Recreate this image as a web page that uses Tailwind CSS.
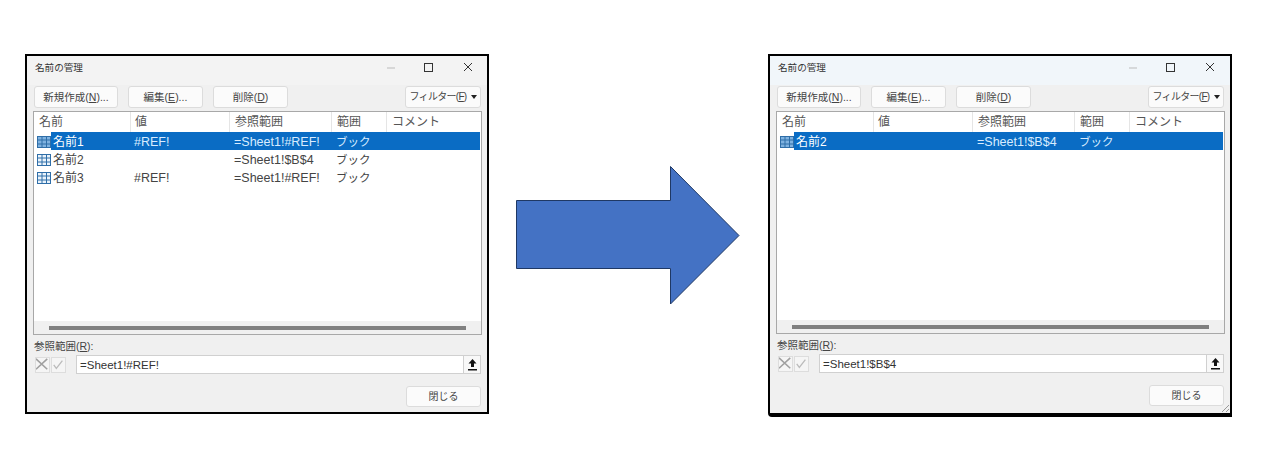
<!DOCTYPE html>
<html lang="ja">
<head>
    <meta charset="UTF-8">
    <title>名前の管理</title>
    <script src="https://cdn.jsdelivr.net/npm/@tailwindcss/browser@4"></script>
</head>
<body class="bg-white">
    <div class="flex items-start w-[1280px] h-[461px] overflow-hidden pl-[25px] pt-[54px] bg-white text-[#444] text-[12.5px] leading-[18px] font-['Liberation_Sans','Noto_Sans_CJK_JP',sans-serif]">

        <!-- before -->
        <div class="relative flex flex-col w-[464px] h-[360px] shrink-0 border-2 border-black bg-[#f0f0f0]">
            <div class="flex items-center h-[29px] pl-2 bg-[#f3f3f3] text-[9.6px] text-[#333]">
                <span class="flex-1 mt-[-6px]">名前の管理</span>
                <svg class="w-[104px] h-[12px] mr-[14px] mt-[-6px]" viewBox="0 0 104 12" fill="none" stroke="#333" stroke-width="1"><path d="M18 6h8" stroke="#bbb"/><rect x="55.5" y="1.5" width="8" height="8"/><path d="M95 1l8 8M103 1l-8 8"/></svg>
            </div>
            <div class="flex h-[22px] ml-[7px] mt-px text-[10.5px]">
                <button class="w-[84px] bg-[#fbfbfb] border border-[#dcdcdc] rounded-[3px]">新規作成(<u>N</u>)...</button>
                <button class="w-[75px] ml-[10px] bg-[#fbfbfb] border border-[#dcdcdc] rounded-[3px]">編集(<u>E</u>)...</button>
                <button class="w-[75px] ml-[10px] bg-[#fbfbfb] border border-[#dcdcdc] rounded-[3px]">削除(<u>D</u>)</button>
                <button class="flex items-center justify-center gap-[4px] w-[76px] ml-[117px] bg-[#fbfbfb] border border-[#dcdcdc] rounded-[3px] text-[10px]"><span class="tracking-[-0.7px]">フィルター(<u>F</u>)</span><svg class="w-[6px] h-[4px]" viewBox="0 0 6 4" fill="#222"><path d="M0 0h6L3 4z"/></svg></button>
            </div>
            <div class="flex flex-col w-[449px] h-[224px] ml-[6px] mt-[3px] border border-[#a8a8a8] bg-white">
                <div class="grid grid-cols-[96px_99px_102px_55px_1fr] h-[20px] shrink-0 text-[12px] leading-[21px] text-[#555]">
                    <div class="pl-[5px]">名前</div>
                    <div class="pl-1 border-l border-[#e5e5e5]">値</div>
                    <div class="pl-[5px] border-l border-[#e5e5e5]">参照範囲</div>
                    <div class="pl-[5px] border-l border-[#e5e5e5]">範囲</div>
                    <div class="pl-[5px] border-l border-[#e5e5e5]">コメント</div>
                </div>
                <div class="relative grid grid-cols-[96px_100px_102px_55px_1fr] h-[18px] mr-px">
                    <div class="absolute left-[17px] right-0 top-0 bottom-0 bg-[#0a6cc4]"></div>
                    <div class="relative flex items-center pl-[3px] gap-[2px] text-white text-[12px]">
                        <svg class="w-[14px] h-[12px] shrink-0" viewBox="0 0 14 12" fill="#7fb2e0" stroke="#2f6ea8"><rect x=".5" y=".5" width="13" height="11"/><path d="M.5 4h13M.5 8h13M5 .5v11M9.5 .5v11"/></svg>
                        <span class="mt-px">名前1</span>
                    </div>
                    <div class="relative pl-1 pt-px text-[#d8ecff]">#REF!</div>
                    <div class="relative pl-1 pt-px text-[#d8ecff]">=Sheet1!#REF!</div>
                    <div class="relative pl-1 pt-px text-[#d8ecff] text-[11.5px]">ブック</div>
                </div>
                <div class="grid grid-cols-[96px_100px_102px_55px_1fr] h-[18px]">
                    <div class="flex items-center pl-[3px] gap-[2px] text-[12px]">
                        <svg class="w-[14px] h-[12px] shrink-0" viewBox="0 0 14 12" fill="#eaf3fb" stroke="#2f6ea8"><rect x=".5" y=".5" width="13" height="11"/><path d="M.5 4h13M.5 8h13M5 .5v11M9.5 .5v11"/></svg>
                        <span class="mt-px">名前2</span>
                    </div>
                    <div class="pl-1 pt-px"></div>
                    <div class="pl-1 pt-px">=Sheet1!$B$4</div>
                    <div class="pl-1 pt-px text-[11.5px]">ブック</div>
                </div>
                <div class="grid grid-cols-[96px_100px_102px_55px_1fr] h-[18px]">
                    <div class="flex items-center pl-[3px] gap-[2px] text-[12px]">
                        <svg class="w-[14px] h-[12px] shrink-0" viewBox="0 0 14 12" fill="#eaf3fb" stroke="#2f6ea8"><rect x=".5" y=".5" width="13" height="11"/><path d="M.5 4h13M.5 8h13M5 .5v11M9.5 .5v11"/></svg>
                        <span class="mt-px">名前3</span>
                    </div>
                    <div class="pl-1 pt-px">#REF!</div>
                    <div class="pl-1 pt-px">=Sheet1!#REF!</div>
                    <div class="pl-1 pt-px text-[11.5px]">ブック</div>
                </div>
                <div class="flex-1"></div>
                <div class="flex items-center h-[13px] bg-[#f0f0f0] pl-[15px]">
                    <div class="w-[417px] h-[4px] bg-[#808080]"></div>
                </div>
            </div>
            <div class="h-[18px] ml-[7px] mt-[2px] text-[10.5px] leading-[18px]">参照範囲(<u>R</u>):</div>
            <div class="flex items-center h-[19px] ml-[8px]">
                <div class="w-[15px] h-[16px] border border-[#ddd] bg-[#f5f5f5]">
                    <svg viewBox="0 0 15 16" fill="none" stroke="#a0a0a0" stroke-width="1.8"><path d="M0 1l13 12M13 1L0 13"/></svg>
                </div>
                <div class="w-[15px] h-[16px] ml-px border border-[#ddd] bg-[#f5f5f5]">
                    <svg viewBox="0 0 15 16" fill="none" stroke="#bbb" stroke-width="1.5"><path d="M2 8l3 4 7-9"/></svg>
                </div>
                <div class="flex items-center w-[405px] h-[19px] ml-[10px] pl-[3px] border border-[#d0d0d0] bg-white text-[11.5px]">
                    <span class="flex-1 text-[#333]">=Sheet1!#REF!</span>
                    <div class="flex items-center justify-center w-[17px] h-[17px] border-l border-[#d0d0d0] bg-[#f8f8f8]">
                        <svg class="w-[9px] h-[12px]" viewBox="0 0 9 12" fill="#111"><path d="M4.5 0L8.5 4.5H6V8H3V4.5H.5zM0 10h9v1.5H0z"/></svg>
                    </div>
                </div>
            </div>
            <button class="w-[75px] h-[21px] ml-[379px] mt-[12px] bg-[#fbfbfb] border border-[#dcdcdc] rounded-[3px] text-[10px]">閉じる</button>
        </div>

        <!-- arrow -->
        <svg class="w-[225px] h-[139px] ml-[27px] mt-[112px] shrink-0" viewBox="0 0 225 139" fill="#4472c4" stroke="#1f3864" stroke-width="1">
            <path d="M.5 34.5H154.5V.5L223 69.5 154.5 138V102.5H.5z" stroke-linejoin="miter"/>
        </svg>

        <!-- after -->
        <div class="relative flex flex-col w-[464px] h-[363px] shrink-0 ml-[27px] border-2 border-b-4 border-black bg-[#f0f0f0] rounded-bl-[4px]">
            <div class="flex items-center h-[29px] pl-2 bg-[#f1f6fa] text-[9.6px] text-[#333]">
                <span class="flex-1 mt-[-6px]">名前の管理</span>
                <svg class="w-[104px] h-[12px] mr-[15px] mt-[-6px]" viewBox="0 0 104 12" fill="none" stroke="#333" stroke-width="1"><path d="M18 6h8" stroke="#bbb"/><rect x="55.5" y="1.5" width="8" height="8"/><path d="M95 1l8 8M103 1l-8 8"/></svg>
            </div>
            <div class="flex h-[22px] ml-[7px] mt-px text-[10.5px]">
                <button class="w-[84px] bg-[#fbfbfb] border border-[#dcdcdc] rounded-[3px]">新規作成(<u>N</u>)...</button>
                <button class="w-[75px] ml-[10px] bg-[#fbfbfb] border border-[#dcdcdc] rounded-[3px]">編集(<u>E</u>)...</button>
                <button class="w-[75px] ml-[10px] bg-[#fbfbfb] border border-[#dcdcdc] rounded-[3px]">削除(<u>D</u>)</button>
                <button class="flex items-center justify-center gap-[4px] w-[76px] ml-[117px] bg-[#fbfbfb] border border-[#dcdcdc] rounded-[3px] text-[10px]"><span class="tracking-[-0.7px]">フィルター(<u>F</u>)</span><svg class="w-[6px] h-[4px]" viewBox="0 0 6 4" fill="#222"><path d="M0 0h6L3 4z"/></svg></button>
            </div>
            <div class="flex flex-col w-[449px] h-[223px] ml-[6px] mt-[3px] border border-[#a8a8a8] bg-white">
                <div class="grid grid-cols-[96px_99px_102px_55px_1fr] h-[20px] shrink-0 text-[12px] leading-[21px] text-[#555]">
                    <div class="pl-[5px]">名前</div>
                    <div class="pl-1 border-l border-[#e5e5e5]">値</div>
                    <div class="pl-[5px] border-l border-[#e5e5e5]">参照範囲</div>
                    <div class="pl-[5px] border-l border-[#e5e5e5]">範囲</div>
                    <div class="pl-[5px] border-l border-[#e5e5e5]">コメント</div>
                </div>
                <div class="relative grid grid-cols-[96px_100px_102px_55px_1fr] h-[18px] mr-px">
                    <div class="absolute left-[17px] right-0 top-0 bottom-0 bg-[#0a6cc4]"></div>
                    <div class="relative flex items-center pl-[3px] gap-[2px] text-white text-[12px]">
                        <svg class="w-[14px] h-[12px] shrink-0" viewBox="0 0 14 12" fill="#7fb2e0" stroke="#2f6ea8"><rect x=".5" y=".5" width="13" height="11"/><path d="M.5 4h13M.5 8h13M5 .5v11M9.5 .5v11"/></svg>
                        <span class="mt-px">名前2</span>
                    </div>
                    <div class="relative pl-1"></div>
                    <div class="relative pl-1 pt-px text-[#d8ecff]">=Sheet1!$B$4</div>
                    <div class="relative pl-1 pt-px text-[#d8ecff] text-[11.5px]">ブック</div>
                </div>
                <div class="flex-1"></div>
                <div class="flex items-center h-[13px] bg-[#f0f0f0] pl-[15px]">
                    <div class="w-[417px] h-[4px] bg-[#808080]"></div>
                </div>
            </div>
            <div class="h-[18px] ml-[7px] mt-[2px] text-[10.5px] leading-[18px]">参照範囲(<u>R</u>):</div>
            <div class="flex items-center h-[19px] ml-[8px]">
                <div class="w-[15px] h-[16px] border border-[#ddd] bg-[#f5f5f5]">
                    <svg viewBox="0 0 15 16" fill="none" stroke="#a0a0a0" stroke-width="1.8"><path d="M0 1l13 12M13 1L0 13"/></svg>
                </div>
                <div class="w-[15px] h-[16px] ml-px border border-[#ddd] bg-[#f5f5f5]">
                    <svg viewBox="0 0 15 16" fill="none" stroke="#bbb" stroke-width="1.5"><path d="M2 8l3 4 7-9"/></svg>
                </div>
                <div class="flex items-center w-[405px] h-[19px] ml-[10px] pl-[3px] border border-[#d0d0d0] bg-white text-[11.5px]">
                    <span class="flex-1 text-[#333]">=Sheet1!$B$4</span>
                    <div class="flex items-center justify-center w-[17px] h-[17px] border-l border-[#d0d0d0] bg-[#f8f8f8]">
                        <svg class="w-[9px] h-[12px]" viewBox="0 0 9 12" fill="#111"><path d="M4.5 0L8.5 4.5H6V8H3V4.5H.5zM0 10h9v1.5H0z"/></svg>
                    </div>
                </div>
            </div>
            <button class="w-[75px] h-[21px] ml-[379px] mt-[12px] bg-[#fbfbfb] border border-[#dcdcdc] rounded-[3px] text-[10px]">閉じる</button>
            <svg class="absolute right-0 bottom-0 w-[9px] h-[9px]" viewBox="0 0 9 9" stroke="#999" fill="none"><path d="M8 1L1 8M8 5L5 8"/></svg>
        </div>
    </div>
</body>
</html>
